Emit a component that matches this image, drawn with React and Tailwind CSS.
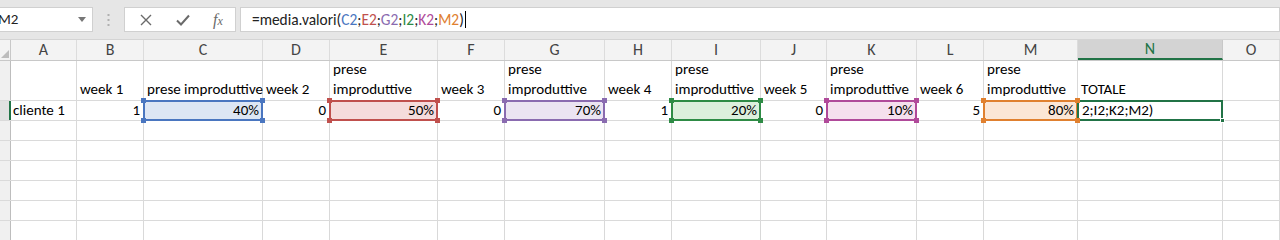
import React from "react";

const cols = [
  { k: "A", w: "w-[66px]" },
  { k: "B", w: "w-[67px]" },
  { k: "C", w: "w-[119px]" },
  { k: "D", w: "w-[67px]" },
  { k: "E", w: "w-[108px]" },
  { k: "F", w: "w-[67px]" },
  { k: "G", w: "w-[100px]" },
  { k: "H", w: "w-[67px]" },
  { k: "I", w: "w-[89px]" },
  { k: "J", w: "w-[66px]" },
  { k: "K", w: "w-[90px]" },
  { k: "L", w: "w-[67px]" },
  { k: "M", w: "w-[94px]" },
  { k: "N", w: "w-[145px]" },
  { k: "O", w: "w-[57px]" },
];

const row1 = {
  B: ["week 1"],
  C: ["prese improduttive"],
  D: ["week  2"],
  E: ["prese", "improduttive"],
  F: ["week 3"],
  G: ["prese", "improduttive"],
  H: ["week 4"],
  I: ["prese", "improduttive"],
  J: ["week 5"],
  K: ["prese", "improduttive"],
  L: ["week 6"],
  M: ["prese", "improduttive"],
  N: ["TOTALE"],
};

const ranges = {
  C: { border: "border-[#4a76c0]", fill: "bg-[#dde6f4]", sq: "bg-[#4a76c0]", text: "40%" },
  E: { border: "border-[#c0504d]", fill: "bg-[#f5dcdc]", sq: "bg-[#c0504d]", text: "50%" },
  G: { border: "border-[#8a6bb0]", fill: "bg-[#ebe4f2]", sq: "bg-[#8a6bb0]", text: "70%" },
  I: { border: "border-[#2e8b45]", fill: "bg-[#dcefdc]", sq: "bg-[#2e8b45]", text: "20%" },
  K: { border: "border-[#b04a9a]", fill: "bg-[#f5e0ee]", sq: "bg-[#b04a9a]", text: "10%" },
  M: { border: "border-[#e0802f]", fill: "bg-[#fbe6d6]", sq: "bg-[#e0802f]", text: "80%" },
};

const nums = { B: "1", D: "0", F: "0", H: "1", J: "0", L: "5" };

const font = { fontFamily: "Carlito, Lato, 'Open Sans', sans-serif" };

function Corner({ cls, pos }) {
  return <div className={`absolute w-[5px] h-[5px] ${cls} ${pos}`} />;
}

function Row2Cell({ c }) {
  const r = ranges[c.k];
  if (r) {
    return (
      <div className={`${c.w} h-full shrink-0 relative border-r border-[#d9d9d9]`}>
        <div className={`absolute left-[-1px] top-[-1px] right-[-1px] bottom-[-1px] border-2 ${r.border} ${r.fill} flex items-center justify-end pr-[2px] text-[15px] text-black z-10`}>
          {r.text}
        </div>
        <Corner cls={r.sq} pos="left-[-3px] top-[-3px] z-20" />
        <Corner cls={r.sq} pos="right-[-3px] top-[-3px] z-20" />
        <Corner cls={r.sq} pos="left-[-3px] bottom-[-3px] z-20" />
        <Corner cls={r.sq} pos="right-[-3px] bottom-[-3px] z-20" />
      </div>
    );
  }
  if (c.k === "A") {
    return (
      <div className={`${c.w} h-full shrink-0 border-r border-[#d9d9d9] flex items-center pl-[2px] text-[15px]`}>
        cliente 1
      </div>
    );
  }
  if (c.k === "N") {
    return (
      <div className={`${c.w} h-full shrink-0 relative border-r border-[#d9d9d9]`}>
        <div className="absolute left-[-1px] top-[-1px] right-[-1px] bottom-[-1px] border-2 border-[#217346] flex items-center pl-[3px] text-[15px] text-black z-10">
          2;I2;K2;M2)
        </div>
        <div className="absolute right-[-3px] bottom-[-3px] w-[5px] h-[5px] bg-[#217346] border border-white z-20" />
      </div>
    );
  }
  return (
    <div className={`${c.w} h-full shrink-0 border-r border-[#d9d9d9] flex items-center justify-end pr-[3px] text-[15px]`}>
      {nums[c.k] || ""}
    </div>
  );
}

export default function App() {
  const emptyRows = [0, 1, 2, 3, 4, 5];
  return (
    <div className="w-[1280px] h-[240px] overflow-hidden bg-white text-black" style={font}>
      {/* Formula bar */}
      <div className="h-[40px] bg-[#e6e6e6] flex items-center border-b border-[#d4d4d4]">
        <div className="w-[93px] h-[25px] bg-white border border-[#d0d0d0] border-l-0 flex items-center justify-between pr-[6px] relative">
          <span className="text-[15px] text-[#222] ml-[-2px]">M2</span>
          <svg width="8" height="5" viewBox="0 0 8 5"><path d="M0 0 L8 0 L4 5 Z" fill="#777" /></svg>
        </div>
        <div className="w-[31px] flex justify-center">
          <svg width="3" height="12" viewBox="0 0 3 12">
            <rect x="0.5" y="0" width="2" height="2" fill="#b0b0b0" />
            <rect x="0.5" y="5" width="2" height="2" fill="#b0b0b0" />
            <rect x="0.5" y="10" width="2" height="2" fill="#b0b0b0" />
          </svg>
        </div>
        <div className="w-[112px] h-[25px] bg-white border border-[#d0d0d0] flex items-center">
          <div className="w-[37px] flex justify-center ml-[2px]">
            <svg width="12" height="12" viewBox="0 0 12 12"><path d="M1 1 L11 11 M11 1 L1 11" stroke="#6a6a6a" strokeWidth="1.4" /></svg>
          </div>
          <div className="w-[37px] flex justify-center">
            <svg width="14" height="12" viewBox="0 0 14 12"><path d="M1 6.5 L5 10.5 L13 1.5" stroke="#6a6a6a" strokeWidth="2" fill="none" /></svg>
          </div>
          <div className="w-[34px] flex justify-center">
            <span className="text-[16px] italic text-[#6a6a6a]" style={{ fontFamily: "'Liberation Serif', serif" }}>
              f<span className="text-[12px]">x</span>
            </span>
          </div>
        </div>
        <div className="flex-1 h-[25px] bg-white border border-[#d0d0d0] ml-[4px] flex items-center pl-[11px] text-[15.4px] text-[#222]">
          <span>=media.valori(</span>
          <span className="text-[#4a76c0]">C2</span>;
          <span className="text-[#c0504d]">E2</span>;
          <span className="text-[#8a6bb0]">G2</span>;
          <span className="text-[#2e8b45]">I2</span>;
          <span className="text-[#b04a9a]">K2</span>;
          <span className="text-[#e0802f]">M2</span>
          <span>)</span>
          <span className="w-px h-[17px] bg-black ml-[1px]" />
        </div>
      </div>

      {/* Column headers */}
      <div className="h-[21px] flex bg-[#f3f3f3] border-b border-[#c8c8c8]">
        <div className="w-[11px] h-full shrink-0 border-r border-[#c8c8c8] relative">
          <svg className="absolute right-[1px] bottom-[2px]" width="8" height="8" viewBox="0 0 8 8"><path d="M8 0 L8 8 L0 8 Z" fill="#bdbdbd" /></svg>
        </div>
        {cols.map((c) => (
          <div
            key={c.k}
            className={`${c.w} h-full shrink-0 flex items-center justify-center text-[16px] ${c.k === "N" ? "bg-[#d3d3d3] text-[#217346] border-b-2 border-[#217346] border-r border-r-[#c8c8c8]" : "text-[#444] border-r border-[#dcdcdc]"}`}
          >
            {c.k}
          </div>
        ))}
      </div>

      {/* Row 1 */}
      <div className="h-[40px] flex border-b border-[#dadada]">
        <div className="w-[11px] h-full shrink-0 bg-[#f0f0f0] border-r border-[#bdbdbd]" />
        {cols.map((c) => (
          <div key={c.k} className={`${c.w} h-full shrink-0 border-r border-[#d9d9d9] flex flex-col justify-end pl-[3px] pb-[1px] text-[15px] leading-[20px] whitespace-nowrap overflow-visible`}>
            {(row1[c.k] || []).map((t, i) => (
              <span key={i}>{t}</span>
            ))}
          </div>
        ))}
      </div>

      {/* Row 2 */}
      <div className="h-[20px] flex border-b border-[#dadada]">
        <div className="w-[11px] h-full shrink-0 bg-[#e1e1e1] border-r-2 border-[#217346]" />
        {cols.map((c) => (
          <Row2Cell key={c.k} c={c} />
        ))}
      </div>

      {/* Empty rows */}
      {emptyRows.map((r) => (
        <div key={r} className="h-[20px] flex border-b border-[#dadada]">
          <div className="w-[11px] h-full shrink-0 bg-[#f0f0f0] border-r border-[#bdbdbd]" />
          {cols.map((c) => (
            <div key={c.k} className={`${c.w} h-full shrink-0 border-r border-[#d9d9d9]`} />
          ))}
        </div>
      ))}
    </div>
  );
}
